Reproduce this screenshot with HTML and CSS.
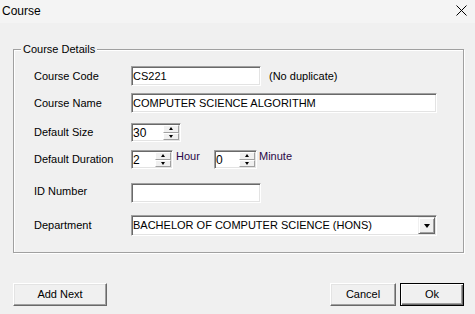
FILE: index.html
```html
<!DOCTYPE html>
<html>
<head>
<meta charset="utf-8">
<title>Course</title>
<link rel="stylesheet" href="styles.css">
</head>
<body>
<div class="window">
  <div class="titlebar">
    <span class="title">Course</span>
    <svg class="close" width="11" height="11" viewBox="0 0 11 11"><path d="M0.5 0.5 L10.5 10.5 M10.5 0.5 L0.5 10.5" stroke="#000" stroke-width="1" fill="none"/></svg>
  </div>
  <div class="content">
    <div class="group">
      <span class="legend">Course Details</span>
      <div class="row r1">
        <span class="label">Course Code</span>
        <div class="field w130">CS221</div>
        <span class="note">(No duplicate)</span>
      </div>
      <div class="row r2">
        <span class="label">Course Name</span>
        <div class="field w306">COMPUTER SCIENCE ALGORITHM</div>
      </div>
      <div class="row r3">
        <span class="label">Default Size</span>
        <div class="field spinner w50">
          <span class="value">30</span>
          <div class="spin">
            <div class="sbtn"><span class="tri-up"></span></div>
            <div class="sbtn"><span class="tri-down"></span></div>
          </div>
        </div>
      </div>
      <div class="row r4">
        <span class="label">Default Duration</span>
        <div class="field spinner w42">
          <span class="value">2</span>
          <div class="spin">
            <div class="sbtn"><span class="tri-up"></span></div>
            <div class="sbtn"><span class="tri-down"></span></div>
          </div>
        </div>
        <span class="unit hour">Hour</span>
        <div class="field spinner w43">
          <span class="value">0</span>
          <div class="spin">
            <div class="sbtn"><span class="tri-up"></span></div>
            <div class="sbtn"><span class="tri-down"></span></div>
          </div>
        </div>
        <span class="unit minute">Minute</span>
      </div>
      <div class="row r5">
        <span class="label up">ID Number</span>
        <div class="field w130"></div>
      </div>
      <div class="row r6">
        <span class="label">Department</span>
        <div class="field select w306">
          <span class="value">BACHELOR OF COMPUTER SCIENCE (HONS)</span>
          <div class="dropbtn"><span class="tri-drop"></span></div>
        </div>
      </div>
    </div>
    <div class="buttons">
      <div class="btn addnext">Add Next</div>
      <div class="right">
        <div class="btn cancel">Cancel</div>
        <div class="btn ok">Ok</div>
      </div>
    </div>
  </div>
</div>
</body>
</html>
```

FILE: styles.css
```css
html, body {
  margin: 0;
  padding: 0;
  background: #f0f0f0;
}
body {
  font-family: "Liberation Sans", Arial, sans-serif;
  font-size: 11px;
  line-height: 13px;
  color: #000;
}
.window {
  width: 475px;
  height: 314px;
  background: #f0f0f0;
}
.titlebar {
  height: 23px;
  background: #f4f4f4;
  display: flex;
  align-items: center;
  justify-content: space-between;
  padding: 0 8px 0 2px;
}
.title {
  font-size: 12px;
}
.close {
  display: block;
  margin-top: -2px;
}
.content {
  padding: 26px 11px 0 13px;
}
.group {
  position: relative;
  height: 204px;
  box-sizing: border-box;
  border: 1px solid #a0a0a0;
  box-shadow: 1px 1px 0 #ffffff, inset 1px 1px 0 #ffffff;
  padding: 16px 0 0 20px;
}
.legend {
  position: absolute;
  top: -7px;
  left: 7px;
  padding: 0 2px;
  background: #f0f0f0;
}
.row {
  display: flex;
  align-items: center;
}
.r1 { height: 20px; }
.r2 { height: 20px; margin-top: 7px; }
.r3 { height: 19px; margin-top: 10px; }
.r4 { height: 19px; margin-top: 8px; align-items: stretch; }
.r5 { height: 20px; margin-top: 14px; }
.r6 { height: 21px; margin-top: 12px; }
.label {
  width: 97px;
  flex: none;
}
.r4 .label { align-self: center; }
.label.up { margin-top: -4px; }
.field {
  box-sizing: border-box;
  height: 100%;
  background: #fff;
  border-top: 1px solid #a0a0a0;
  border-left: 1px solid #a0a0a0;
  border-right: 1px solid #ffffff;
  border-bottom: 1px solid #ffffff;
  box-shadow: inset 1px 1px 0 #696969, inset -1px -1px 0 #e3e3e3;
  padding: 0 0 0 1px;
  display: flex;
  align-items: center;
  overflow: hidden;
  white-space: nowrap;
  flex: none;
}
.w130 { width: 130px; }
.w306 { width: 306px; }
.w50 { width: 50px; }
.w42 { width: 42px; }
.w43 { width: 43px; }
.note {
  margin-left: 8px;
}
.spinner {
  align-items: stretch;
  padding-right: 1px;
  padding-bottom: 1px;
}
.spinner .value {
  flex: 1;
  display: flex;
  align-items: center;
  padding-top: 2px;
  font-size: 12px;
}
.spin {
  width: 16px;
  display: flex;
  flex-direction: column;
  padding-top: 1px;
}
.sbtn {
  flex: 1;
  box-sizing: border-box;
  background: #f0f0f0;
  border-top: 1px solid #ffffff;
  border-left: 1px solid #ffffff;
  border-right: 1px solid #a0a0a0;
  border-bottom: 1px solid #a0a0a0;
  display: flex;
  align-items: center;
  justify-content: center;
}
.tri-up {
  width: 0;
  height: 0;
  border-left: 2.5px solid transparent;
  border-right: 2.5px solid transparent;
  border-bottom: 3px solid #000;
}
.tri-down {
  width: 0;
  height: 0;
  border-left: 2.5px solid transparent;
  border-right: 2.5px solid transparent;
  border-top: 3px solid #000;
}
.unit {
  color: #2a0848;
  align-self: flex-start;
  margin-top: 0;
}
.hour {
  width: 38px;
  margin-left: 3px;
}
.minute {
  margin-left: 2px;
}
.select {
  padding-right: 1px;
  align-items: stretch;
  padding-top: 0;
}
.select .value {
  flex: 1;
  display: flex;
  align-items: center;
}
.dropbtn {
  width: 17px;
  margin: 1px 0 1px 0;
  box-sizing: border-box;
  background: #f0f0f0;
  border-top: 1px solid #f0f0f0;
  border-left: 1px solid #f0f0f0;
  border-right: 1px solid #696969;
  border-bottom: 1px solid #696969;
  box-shadow: inset 1px 1px 0 #ffffff, inset -1px -1px 0 #a0a0a0;
  display: flex;
  align-items: center;
  justify-content: center;
}
.tri-drop {
  width: 0;
  height: 0;
  border-left: 3.5px solid transparent;
  border-right: 3.5px solid transparent;
  border-top: 4px solid #000;
  margin-top: 1px;
}
.buttons {
  margin-top: 30px;
  display: flex;
  justify-content: space-between;
}
.right {
  display: flex;
  gap: 4px;
}
.btn {
  box-sizing: border-box;
  height: 23px;
  background: #f0f0f0;
  border-top: 1px solid #ffffff;
  border-left: 1px solid #ffffff;
  border-right: 1px solid #696969;
  border-bottom: 1px solid #696969;
  box-shadow: inset -1px -1px 0 #a0a0a0, inset 1px 1px 0 #e3e3e3;
  display: flex;
  align-items: center;
  justify-content: center;
}
.addnext { width: 94px; }
.cancel { width: 66px; }
.ok {
  width: 64px;
  border: 1px solid #000;
  box-shadow: inset 1px 1px 0 #ffffff, inset -1px -1px 0 #696969, inset -2px -2px 0 #a0a0a0;
}
```
